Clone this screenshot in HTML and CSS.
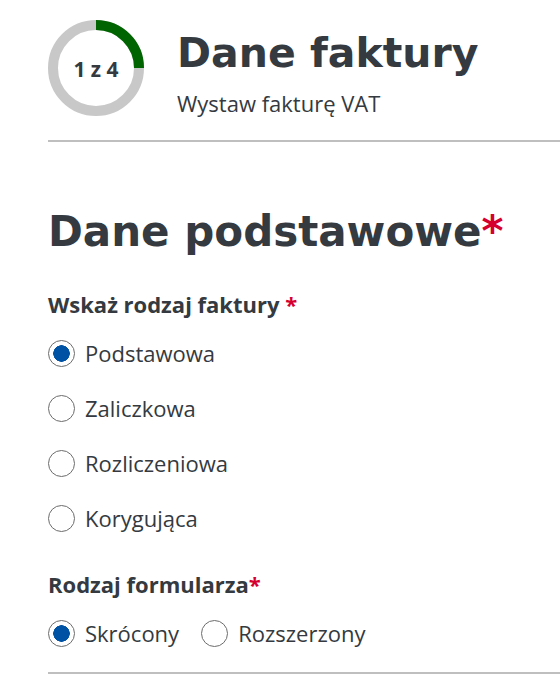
FILE: index.html
```html
<!DOCTYPE html>
<html lang="pl">
<head>
  <meta charset="UTF-8">
  <title>Dane faktury</title>
  <link rel="stylesheet" href="styles.css">
</head>
<body>

<div class="page">
  <header class="step-header">
    <div class="step-ring">
      <svg viewBox="0 0 96 96" width="96" height="96">
        <circle class="ring-track" cx="48" cy="48" r="43"/>
        <circle class="ring-progress" cx="48" cy="48" r="43" transform="rotate(-90 48 48)"/>
      </svg>
      <span class="step-count">1 z 4</span>
    </div>
    <div class="step-text">
      <h1>Dane faktury</h1>
      <p class="subtitle">Wystaw fakturę VAT</p>
    </div>
  </header>

  <form class="invoice-form">
    <h2>Dane podstawowe<span class="req">*</span></h2>

    <div class="group">
      <p class="group-label">Wskaż rodzaj faktury <span class="req">*</span></p>
      <div class="options stacked">
        <label class="option"><input type="radio" name="invoiceType" checked> Podstawowa</label>
        <label class="option"><input type="radio" name="invoiceType"> Zaliczkowa</label>
        <label class="option"><input type="radio" name="invoiceType"> Rozliczeniowa</label>
        <label class="option"><input type="radio" name="invoiceType"> Korygująca</label>
      </div>
    </div>

    <div class="group">
      <p class="group-label">Rodzaj formularza<span class="req">*</span></p>
      <div class="options inline">
        <label class="option"><input type="radio" name="formType" checked> Skrócony</label>
        <label class="option"><input type="radio" name="formType"> Rozszerzony</label>
      </div>
    </div>
  </form>
</div>

</body>
</html>
```

FILE: styles.css
```css
body {
  margin: 0;
  font-family: "Open Sans", sans-serif;
  color: #343a40;
  background: #fff;
}
.page {
  padding-left: 48px;
}
.step-header {
  display: flex;
  align-items: flex-start;
  gap: 33px;
  padding: 20px 0 23px;
  border-bottom: 2px solid #bfbfbf;
}
.step-ring {
  display: grid;
  place-items: center;
  width: 96px;
  height: 96px;
  flex: none;
}
.step-ring svg,
.step-count {
  grid-area: 1 / 1;
}
.ring-track,
.ring-progress {
  fill: none;
  stroke-width: 10;
}
.ring-track {
  stroke: #c8c8c8;
}
.ring-progress {
  stroke: #006400;
  stroke-dasharray: 67.5 270.2;
}
.step-count {
  font-weight: 700;
  font-size: 21px;
  padding-top: 2px;
}
.step-text {
  padding-top: 9px;
}
h1,
h2 {
  font-family: "DejaVu Sans", sans-serif;
  font-weight: 700;
  font-size: 41px;
  line-height: 48px;
  margin: 0;
}
.subtitle {
  margin: 12px 0 0;
  font-size: 22px;
  line-height: 28px;
}
.invoice-form {
  padding-bottom: 25px;
  border-bottom: 2px solid #bfbfbf;
}
h2 {
  font-size: 42px;
  margin-top: 66px;
}
.req {
  color: #d6002f;
}
.group-label {
  font-weight: 700;
  font-size: 22px;
  line-height: 28px;
  margin: 34px 0 21px;
}
.group + .group .group-label {
  margin-top: 38px;
}
.options {
  display: flex;
}
.options.stacked {
  flex-direction: column;
  align-items: flex-start;
  gap: 27px;
}
.options.inline {
  gap: 22px;
}
.option {
  display: flex;
  align-items: center;
  gap: 10px;
  font-size: 22px;
  line-height: 28px;
  cursor: pointer;
}
.option input {
  appearance: none;
  -webkit-appearance: none;
  margin: 0;
  width: 27px;
  height: 27px;
  border: 1px solid #6c6c6c;
  border-radius: 50%;
  background: #fff;
  cursor: pointer;
}
.option input:checked {
  background: radial-gradient(circle, #0052a5 0 8px, #fff 8.5px);
}
```
